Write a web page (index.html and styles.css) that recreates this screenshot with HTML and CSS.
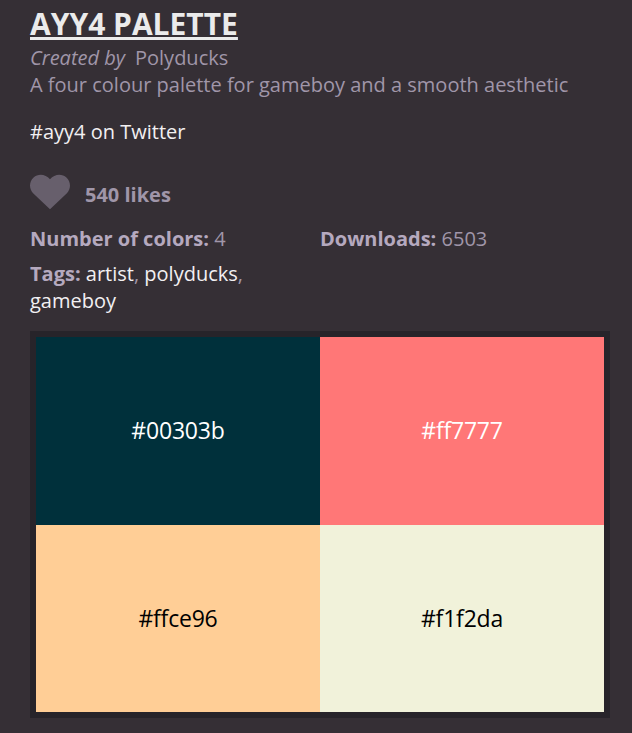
FILE: index.html
```html
<!DOCTYPE html>
<html lang="en">
<head>
<meta charset="utf-8">
<title>AYY4 Palette</title>
<link rel="stylesheet" href="styles.css">
</head>
<body>
<main class="palette">
  <h1 class="title"><a href="#">AYY4 PALETTE</a></h1>
  <p class="author"><em>Created by</em><a href="#">Polyducks</a></p>
  <p class="description">A four colour palette for gameboy and a smooth aesthetic</p>
  <p class="twitter"><a href="#">#ayy4 on Twitter</a></p>
  <div class="likes">
    <svg class="heart" viewBox="0 0 40 40" aria-hidden="true"><path d="M20 7.300C24.500 1.700 32 1.300 36.400 5.500C41.200 10 41 16.800 36.900 21.200L20 37.300L3.100 21.200C-1 16.800-1.200 10 3.600 5.500C8 1.300 15.500 1.700 20 7.300Z"/></svg>
    <span>540 likes</span>
  </div>
  <div class="facts">
    <p><strong>Number of colors:</strong> 4</p>
    <p><strong>Downloads:</strong> 6503</p>
    <p><strong>Tags:</strong> <a href="#">artist</a>, <a href="#">polyducks</a>, <a href="#">gameboy</a></p>
  </div>
  <div class="swatches">
    <div class="swatch navy">#00303b</div>
    <div class="swatch coral">#ff7777</div>
    <div class="swatch peach">#ffce96</div>
    <div class="swatch cream">#f1f2da</div>
  </div>
</main>
</body>
</html>
```

FILE: styles.css
```css
* { box-sizing: border-box; }
body {
  margin: 0;
  background: #352f35;
  color: #a096a9;
  font: 20px/27px "Open Sans", sans-serif;
}
p, h1 { margin: 0; }
a { color: #f2f0f2; text-decoration: none; }
.palette { width: 580px; margin-left: 30px; padding-top: 4px; }
.title { font-size: 30px; line-height: 40px; font-weight: 700; }
.title a { color: #ebebeb; text-decoration: underline; text-decoration-thickness: 3px; }
.author a { color: #a096a9; margin-left: 10px; }
.twitter { margin-top: 20px; }
.likes { display: flex; height: 40px; margin-top: 27px; gap: 15px; font-weight: 700; }
.likes span { padding-top: 9px; }
.heart { width: 40px; height: 40px; fill: #675f6c; }
.facts { display: grid; grid-template-columns: 290px 290px; row-gap: 8px; margin-top: 13px; }
.facts strong { color: #b5a9bf; }
.swatches {
  display: grid;
  grid-template-columns: 1fr 1fr;
  grid-template-rows: 188px 187px;
  border: 6px solid #27242a;
  margin-top: 17px;
}
.swatch { display: flex; align-items: center; justify-content: center; padding-bottom: 1px; font-size: 23px; letter-spacing: -0.2px; }
.navy { background: #00303b; color: #fff; }
.coral { background: #ff7777; color: #fff; }
.peach { background: #ffce96; color: #000; }
.cream { background: #f1f2da; color: #000; }
```
